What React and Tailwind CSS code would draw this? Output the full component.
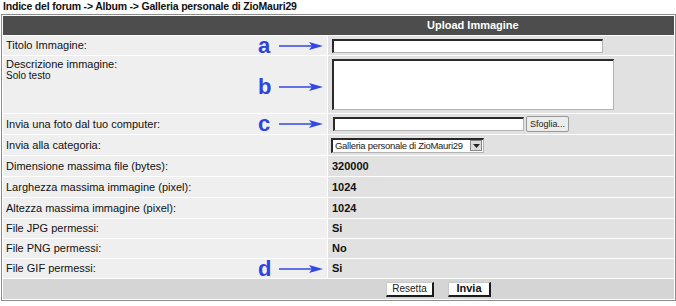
import React from "react";

const font = { fontFamily: '"Liberation Sans", Arial, sans-serif' };

const Arrow = () => (
  <svg width="44" height="10" viewBox="0 0 44 10" className="block">
    <line x1="0" y1="5" x2="34" y2="5" stroke="#3347e6" strokeWidth="1.6" />
    <path d="M30 1 L44 5 L30 9 L33 5 Z" fill="#3347e6" />
  </svg>
);

const Mark = ({ letter }) => (
  <div className="flex items-center">
    <span className="w-[12px] text-[22px] font-black leading-none text-[#2f43e0] text-center">
      {letter}
    </span>
    <span className="ml-[9px]">
      <Arrow />
    </span>
  </div>
);

const Row = ({ label, mark, h = "h-[20px]", children }) => (
  <>
    <div
      className={`${h} bg-[#efefef] flex items-center justify-between pl-[3px] pr-[4px] text-[11px] text-[#111]`}
    >
      <span>{label}</span>
      {mark && <Mark letter={mark} />}
    </div>
    <div className={`${h} bg-[#e1e1e1] flex items-center pl-[4px] text-[11px] text-[#111]`}>
      {children}
    </div>
  </>
);

const insetBox =
  "bg-white border-t-2 border-l-2 border-b border-r border-t-[#2a2a2a] border-l-[#2a2a2a] border-b-[#b4b4b4] border-r-[#b4b4b4]";

export default function App() {
  return (
    <div className="w-[676px] h-[306px] bg-white" style={font}>
      <div className="h-[14px] pl-[3px] text-[10.5px] font-bold leading-[12px] tracking-[-0.2px] text-[#111]">
        Indice del forum -&gt; Album -&gt; Galleria personale di ZioMauri29
      </div>

      <div className="ml-px w-[675px] border border-[#8c8c8c] bg-white p-px grid grid-cols-[324px_1fr] gap-px">
        <div className="col-span-2 h-[19px] bg-[#4d4d4d] flex items-center pl-[424px] text-[11px] font-bold text-white">
          Upload Immagine
        </div>

        <Row label="Titolo Immagine:" mark="a" h="h-[19px]">
          <div className={`${insetBox} w-[271px] h-[14px]`} />
        </Row>

        <div className="h-[57px] bg-[#efefef] flex justify-between pl-[3px] pr-[4px] pt-[2px] text-[#111]">
          <div>
            <div className="text-[11px] leading-[12px]">Descrizione immagine:</div>
            <div className="text-[10px] leading-[11px]">Solo testo</div>
          </div>
          <div className="self-center pt-[3px]">
            <Mark letter="b" />
          </div>
        </div>
        <div className="h-[57px] bg-[#e1e1e1] pl-[4px] pt-[3px]">
          <div className={`${insetBox} w-[282px] h-[51px]`} />
        </div>

        <Row label="Invia una foto dal tuo computer:" mark="c">
          <div className={`${insetBox} ml-px w-[191px] h-[14px]`} />
          <button className="ml-[2px] w-[43px] h-[16px] rounded-[2px] border border-[#9a9a9a] bg-[#ececec] text-[9px] leading-none text-[#222]">
            Sfoglia...
          </button>
        </Row>

        <Row label="Invia alla categoria:">
          <div className={`${insetBox} -ml-px w-[153px] h-[15px] flex items-center`}>
            <span className="flex-1 pl-[2px] text-[9.5px] leading-none tracking-[-0.3px] text-[#222] whitespace-nowrap">
              Galleria personale di ZioMauri29
            </span>
            <span className="w-[12px] h-[11px] mr-px bg-[#dcdcdc] border border-[#888] flex items-center justify-center shrink-0">
              <svg width="7" height="4" viewBox="0 0 7 4">
                <path d="M0 0 L7 0 L3.5 4 Z" fill="#222" />
              </svg>
            </span>
          </div>
        </Row>

        <Row label="Dimensione massima file (bytes):">
          <b>320000</b>
        </Row>
        <Row label="Larghezza massima immagine (pixel):">
          <b>1024</b>
        </Row>
        <Row label="Altezza massima immagine (pixel):">
          <b>1024</b>
        </Row>
        <Row label="File JPG permessi:" h="h-[19px]">
          <b>Si</b>
        </Row>
        <Row label="File PNG permessi:" h="h-[19px]">
          <b>No</b>
        </Row>
        <Row label="File GIF permessi:" mark="d" h="h-[19px]">
          <b>Si</b>
        </Row>

        <div className="col-span-2 h-[20px] bg-[#d5d5d5] flex items-center justify-center gap-[14px] pl-[200px]">
          <button className="w-[48px] h-[15px] bg-white border border-t-[#c8c8c8] border-l-[#c8c8c8] border-r-2 border-b-2 border-r-[#1a1a1a] border-b-[#1a1a1a] text-[10px] leading-none text-[#222]">
            Resetta
          </button>
          <button className="w-[43px] h-[15px] bg-white border border-t-[#c8c8c8] border-l-[#c8c8c8] border-r-2 border-b-2 border-r-[#1a1a1a] border-b-[#1a1a1a] text-[11px] font-bold leading-none text-[#111]">
            Invia
          </button>
        </div>
      </div>
    </div>
  );
}
